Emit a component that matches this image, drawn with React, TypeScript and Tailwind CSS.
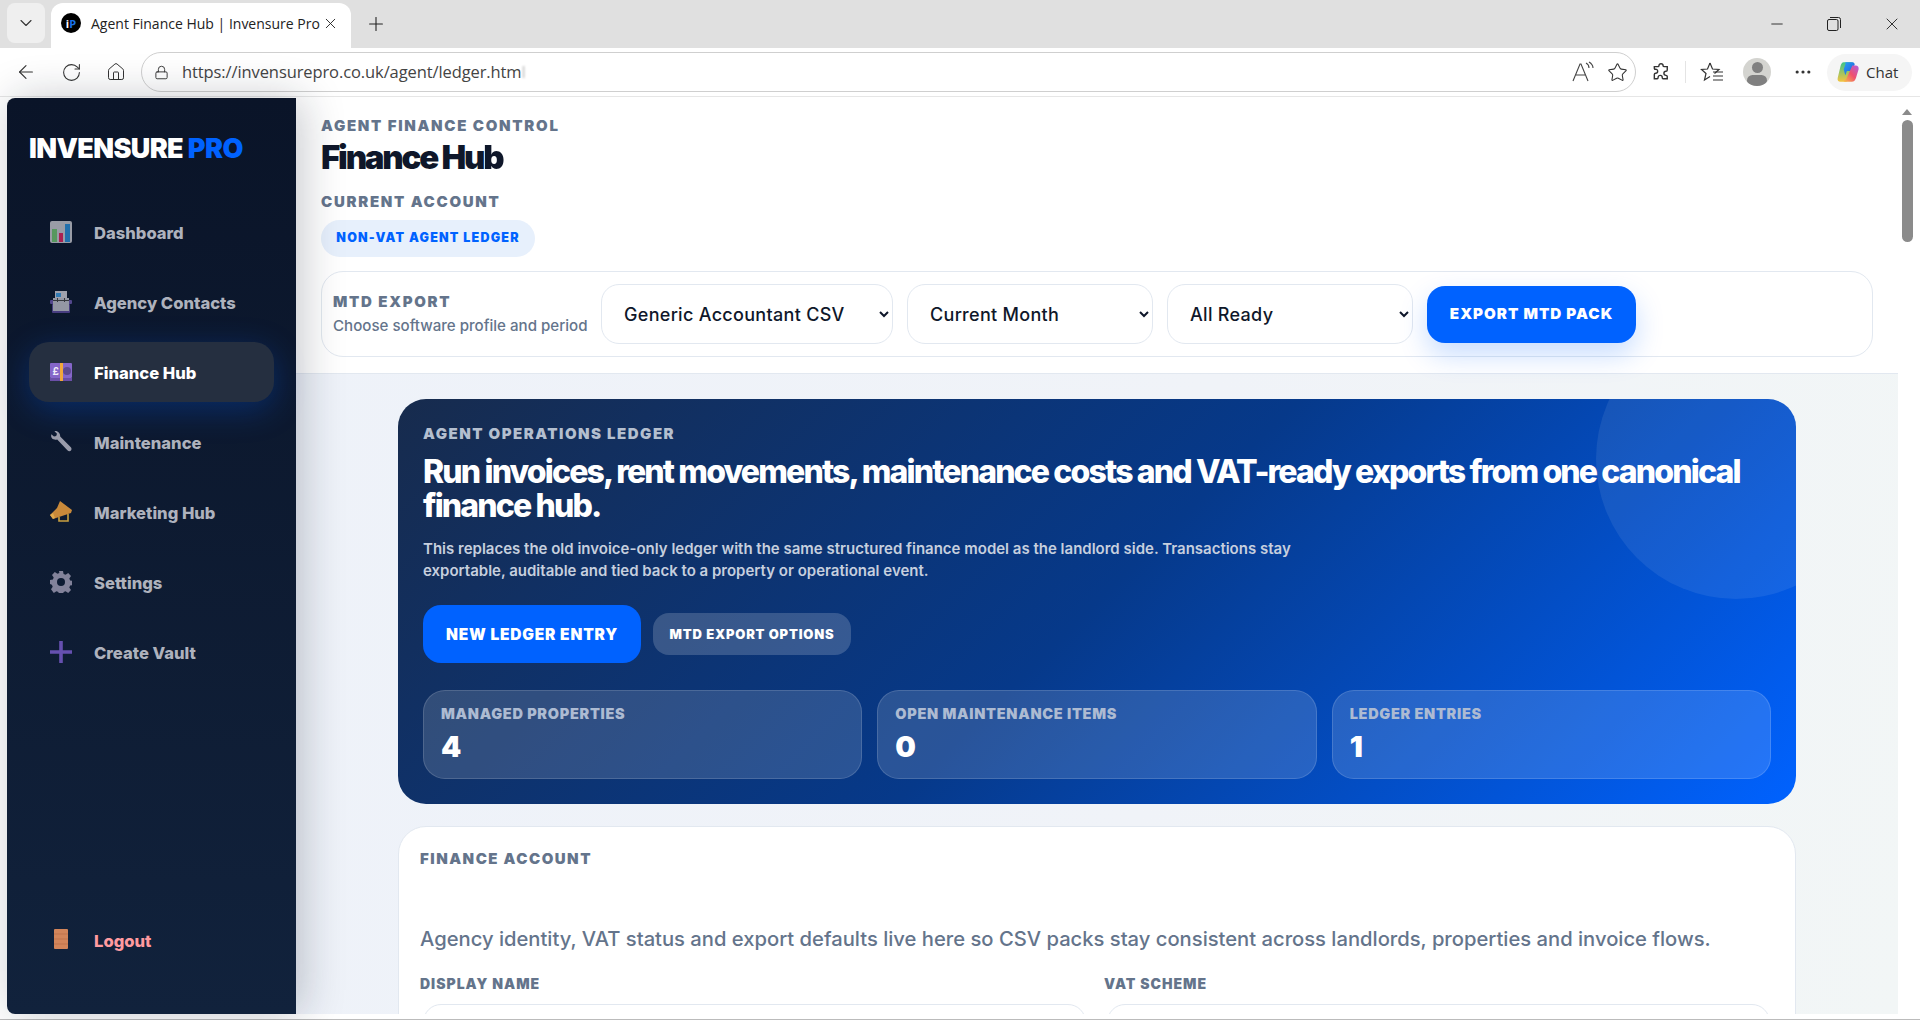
import { ArrowLeft, ChevronDown, Home, Lock, Minus, MoreHorizontal, Plus, RotateCw, Star, X } from "lucide-react";

const font = "font-['Inter','Noto_Sans',sans-serif]";
const chromeFont = "font-['Open_Sans','Noto_Sans',sans-serif]";

const DashIcon = () => (
  <svg viewBox="0 0 22 22" className="w-[22px] h-[22px] opacity-75">
    <rect x="0" y="0" width="22" height="22" rx="2" fill="#c9c9d0" />
    <rect x="2" y="8" width="5" height="13" fill="#6fc46f" />
    <rect x="9" y="12" width="4" height="9" fill="#e0245e" />
    <rect x="15" y="3" width="5" height="18" fill="#2a8fd8" />
  </svg>
);

const ContactsIcon = () => (
  <svg viewBox="0 0 22 22" className="w-[22px] h-[22px] opacity-75">
    <rect x="2" y="13" width="18" height="9" rx="1" fill="#5c4a9c" />
    <rect x="5" y="0" width="12" height="9" fill="#d0d0d8" />
    <rect x="6" y="2" width="5" height="4" fill="#3f9be0" />
    <rect x="0" y="9" width="22" height="4" rx="1" fill="#6b58ad" />
    <rect x="3" y="7" width="16" height="13" fill="#c2c2cc" />
    <rect x="3" y="9" width="16" height="1" fill="#444" />
    <rect x="7" y="7" width="1" height="4" fill="#444" />
    <rect x="14" y="7" width="1" height="4" fill="#444" />
  </svg>
);

const MoneyIcon = () => (
  <svg viewBox="0 0 22 22" className="w-[22px] h-[22px]">
    <rect x="0" y="2" width="22" height="15" rx="1" fill="#8566c9" />
    <rect x="0" y="17" width="22" height="3" fill="#6b4fa8" />
    <rect x="10" y="2" width="3" height="18" fill="#f2a83b" />
    <circle cx="17" cy="10" r="4" fill="#5f4a91" />
    <text x="2.500" y="13.500" fontSize="10" fontWeight="700" fill="#f1edfa" fontFamily="Inter, sans-serif">£</text>
  </svg>
);

const WrenchIcon = () => (
  <svg viewBox="0 0 24 24" className="w-[24px] h-[24px] -mx-px">
    <path
      d="M5.500 1.200 8 3.800 7.200 6 5 6.600 2.300 4.200C1.600 6.800 2.800 9.200 5.400 9.600 6.400 9.800 7.400 9.600 8.200 9.400L18.400 20.200C19.400 21.400 21.200 21.400 22 20.400 22.900 19.400 22.600 18 21.600 17L11.200 6.600C11.400 3.600 8.800.6 5.500 1.200Z"
      fill="#9a9cab"
    />
  </svg>
);

const MegaphoneIcon = () => (
  <svg viewBox="0 0 22 22" className="w-[22px] h-[22px]">
    <path d="M10 0 22 9 21 12 3 18 0 14 7 7Z" fill="#c9893a" />
    <path d="M0 14 3 12 5 17 3 18Z" fill="#e0a94e" />
    <path d="M9 16V20H18V13" fill="none" stroke="#c9a040" strokeWidth="1.600" />
  </svg>
);

const GearIcon = () => (
  <svg viewBox="0 0 22 22" className="w-[22px] h-[22px]">
    <path
      d="M9 0h4l.6 3 2 .8 2.600-1.700 2.800 2.800-1.700 2.600.8 2 2.900.500v4l-2.900.6-.8 2 1.700 2.500-2.800 2.800-2.600-1.700-2 .8-.6 3H9l-.6-3-2-.8-2.600 1.700L1 18.200l1.700-2.500-.8-2L0 13V9l2.900-.5.8-2L2 3.900 4.800 1.100l2.600 1.700 2-.8Z"
      fill="#82829a"
    />
    <circle cx="11" cy="11" r="4" fill="#0d1b33" />
  </svg>
);

const PlusIcon = () => (
  <svg viewBox="0 0 22 22" className="w-[22px] h-[22px]">
    <path d="M9.200 0h3.600v9.200H22v3.600h-9.200V22H9.200v-9.200H0V9.200h9.200Z" fill="#6650b0" />
  </svg>
);

const DoorIcon = () => (
  <svg viewBox="0 0 22 22" className="w-[22px] h-[22px]">
    <rect x="4" y="0" width="14" height="20" rx="1" fill="#d3855a" />
    <path d="M4 5h14M4 10h14M4 15h14" stroke="#b96f47" strokeWidth="0.700" />
  </svg>
);

const items = [
  { label: "Dashboard", icon: <DashIcon /> },
  { label: "Agency Contacts", icon: <ContactsIcon /> },
  { label: "Finance Hub", icon: <MoneyIcon />, active: true },
  { label: "Maintenance", icon: <WrenchIcon /> },
  { label: "Marketing Hub", icon: <MegaphoneIcon /> },
  { label: "Settings", icon: <GearIcon /> },
  { label: "Create Vault", icon: <PlusIcon /> },
];

const stats = [
  { label: "MANAGED PROPERTIES", value: "4" },
  { label: "OPEN MAINTENANCE ITEMS", value: "0" },
  { label: "LEDGER ENTRIES", value: "1" },
];

const BrowserChrome = () => (
  <div className={chromeFont}>
    <div className="h-12 bg-[#e0e0e0] flex items-start pt-[3px] pl-[7px]">
      <div className="w-[38px] h-[40px] rounded-lg bg-[#efefef] flex items-center justify-center">
        <ChevronDown size={20} strokeWidth={1.300} className="text-[#333]" />
      </div>
      <div className="ml-[6px] w-[300px] h-[45px] bg-white rounded-t-xl flex items-center pl-[10px] pr-[12px] pb-[5px]">
        <div className="w-5 h-5 shrink-0 rounded-full bg-black flex items-center justify-center text-[11px] font-bold leading-none">
          <span className="text-white">i</span>
          <span className="text-[#1a73e8]">P</span>
        </div>
        <span className="ml-[10px] text-[14px] text-[#222] whitespace-nowrap">Agent Finance Hub | Invensure Pro</span>
        <X size={17} strokeWidth={1.300} className="ml-auto text-[#222]" />
      </div>
      <div className="ml-[14px] h-[42px] flex items-center">
        <Plus size={22} strokeWidth={1.200} className="text-[#222]" />
      </div>
      <div className="ml-auto h-[42px] flex items-center pr-[18px] gap-[41px] text-[#222]">
        <Minus size={18} strokeWidth={1.200} />
        <svg viewBox="0 0 14 14" className="w-[14px] h-[14px]" fill="none" stroke="#222" strokeWidth="1">
          <rect x="0.500" y="2.500" width="10.500" height="11" rx="1.500" />
          <path d="M3 .5h8.500a2 2 0 0 1 2 2V11" />
        </svg>
        <X size={20} strokeWidth={1.100} />
      </div>
    </div>
    <div className="h-[49px] bg-white flex items-center border-b border-[#e6e6e6] text-[#333]">
      <div className="w-[141px] shrink-0 flex items-center pl-[15px] gap-[24px]">
        <ArrowLeft size={22} strokeWidth={1.200} />
        <RotateCw size={21} strokeWidth={1.200} />
        <Home size={20} strokeWidth={1.200} />
      </div>
      <div className="w-[1495px] h-10 rounded-full border-[1.5px] border-[#cfcfcf] flex items-center pl-[12px] pr-[6px]">
        <Lock size={15} strokeWidth={1.500} />
        <span className="ml-[13px] text-[16.500px] text-[#444] tracking-[-0.1px]">https://invensurepro.co.uk/agent/ledger.htm</span>
        <span className="text-[16.500px] text-[#bbb] blur-[1px]">l</span>
        <svg viewBox="0 0 24 24" className="ml-auto w-[24px] h-[24px]" fill="none" stroke="#444" strokeWidth="1.100">
          <path d="M2 21 9 4h1l7 17M5 15h9" />
          <path d="M15 3c2 1 3 3 3 5M18 2c2.500 1.500 4 4 4 6" />
        </svg>
        <Star size={21} strokeWidth={1.200} className="ml-[12px] mr-[1px]" />
      </div>
      <svg viewBox="0 0 24 24" className="ml-[15px] w-[20px] h-[20px]" fill="none" stroke="#333" strokeWidth="1.700">
        <path d="M9.500 4.500a2.500 2.500 0 0 1 5 0c0 1 .5 1 1.500 1h3.500v4c0 1-.500 1.500-1.500 1.500a2.500 2.500 0 0 0 0 5c1 0 1.500.5 1.500 1.500v2.500h-5c-1 0-1-.5-1-1.500a2.500 2.500 0 0 0-5 0c0 1 0 1.500-1 1.500H4v-5c0-1 .5-1.500 1.500-1.500a2.500 2.500 0 0 0 0-5C4.500 9 4 8.500 4 7.500v-2h4.500c.5 0 1 0 1-1Z" />
      </svg>
      <div className="ml-[14px] w-px h-[22px] bg-[#e4e4e4]" />
      <svg viewBox="0 0 24 24" className="ml-[14px] w-[24px] h-[24px]" fill="none" stroke="#333" strokeWidth="1.200">
        <path d="M10 3 12.500 9 19 9.500 14.500 13.500M10 3 7.500 9 1.500 9.500 6 13.500 4.500 20 10 16.500" />
        <path d="M13 13h10M13 17h10M13 21h10" transform="translate(0 -1)" />
      </svg>
      <div className="ml-[19px] w-7 h-7 rounded-full bg-[#d4d4d0] overflow-hidden flex flex-col items-center">
        <div className="mt-1 w-[11px] h-[11px] rounded-full bg-[#808080]" />
        <div className="mt-[2px] w-[20px] h-[12px] rounded-full bg-[#808080]" />
      </div>
      <MoreHorizontal size={20} strokeWidth={1.800} className="ml-[22px]" />
      <div className="ml-[14px] w-[85px] h-[37px] bg-[#f5f5f5] rounded-full flex items-center pl-[8px]">
        <svg viewBox="0 0 24 24" className="w-[26px] h-[26px]">
          <defs>
            <linearGradient id="cpA" x1="0" y1="0" x2="1" y2="1">
              <stop offset="0" stopColor="#2a9df4" />
              <stop offset="1" stopColor="#1d5fd8" />
            </linearGradient>
            <linearGradient id="cpB" x1="0" y1="1" x2="1" y2="0">
              <stop offset="0" stopColor="#f6c445" />
              <stop offset="0.500" stopColor="#f0506e" />
              <stop offset="1" stopColor="#b05fe0" />
            </linearGradient>
            <linearGradient id="cpC" x1="0" y1="0" x2="0" y2="1">
              <stop offset="0" stopColor="#3dc48a" />
              <stop offset="1" stopColor="#f4c43f" />
            </linearGradient>
          </defs>
          <path d="M8 3h7c1.500 0 1.800 1 1.500 2l-4 14c-.4 1.300-1.200 2-2.500 2H5c-2 0-3-1.500-2.500-3.500L5 7c.5-2.500 1.500-4 3-4Z" fill="url(#cpC)" />
          <path d="M9 3h7c1 0 1.800.5 2.200 1.800L16 11h-5l-1.500 4L8 9.500 9.700 4.500C10 3.500 9.500 3 9 3Z" fill="url(#cpA)" />
          <path d="M16 6h3c2 0 3.200 1.500 2.800 3.500L19.500 17c-.7 2.500-2 4-4 4h-6c-1 0-1.800-.5-2-1.500 1.500 0 2.800-.5 3.300-2Z" fill="url(#cpB)" />
        </svg>
        <span className="ml-[5px] text-[15px] text-[#333]">Chat</span>
      </div>
    </div>
  </div>
);

const Sidebar = () => (
  <aside className="relative z-10 w-[289px] shrink-0 rounded-tl-lg rounded-bl-lg bg-gradient-to-b from-[#0a1428] to-[#11223c] flex flex-col shadow-[6px_0_44px_rgba(15,23,42,0.24)]">
    <div className="pl-[22px] pt-[36px] h-[104px] text-[27px] font-black tracking-[-0.6px] leading-[30px] text-white">
      INVENSURE <span className="text-[#0062ff]">PRO</span>
    </div>
    <nav className="flex flex-col gap-[10px] px-[22px]">
      {items.map((item) => (
        <div
          key={item.label}
          className={
            item.active
              ? "h-[60px] rounded-[20px] bg-[#252f40] flex items-center pl-[21px] gap-[22px] text-[16.600px] font-extrabold text-white shadow-[0_8px_32px_rgba(0,98,255,0.28)]"
              : "h-[60px] rounded-[20px] flex items-center pl-[21px] gap-[22px] text-[16.600px] font-extrabold text-[#aeb2bd]"
          }
        >
          {item.icon}
          <span className="pt-[2px]">{item.label}</span>
        </div>
      ))}
    </nav>
    <div className="mt-auto mb-[44px] mx-[22px] h-[60px] flex items-center pl-[21px] gap-[22px] text-[16.600px] font-extrabold text-[#ff9a9f]">
      <DoorIcon />
      <span className="pt-[2px]">Logout</span>
    </div>
  </aside>
);

const SelectBox = ({ w, value }: { w: string; value: string }) => (
  <select
    defaultValue={value}
    className={`${w} h-[60px] rounded-[18px] border border-[#e2e8f0] bg-white pl-[18px] pr-[8px] text-[18px] font-medium tracking-[0.3px] text-[#0f172a]`}
  >
    <option>{value}</option>
  </select>
);

const Header = () => (
  <header className="bg-white border-b border-[#e2e8f0] h-[276px] pl-[25px] pr-[25px] pt-[20px] shrink-0">
    <div className="text-[15px] leading-[16px] font-black tracking-[1.700px] text-[#64748b]">AGENT FINANCE CONTROL</div>
    <h1 className="mt-[2px] text-[33px] leading-[42px] font-black tracking-[-2.200px] text-[#0f172a]">
      Finance Hu<span className="blur-[0.6px]">b</span>
    </h1>
    <div className="mt-[15px] text-[15px] leading-[18px] font-black tracking-[1.700px] text-[#64748b]">CURRENT ACCOUNT</div>
    <div className="mt-[9px] w-[214px] h-[37px] rounded-full bg-[#e7f0fc] flex items-center justify-center text-[12.500px] font-black tracking-[1.200px] text-[#0062ff]">
      NON-VAT AGENT LEDGER
    </div>
    <div className="mt-[14px] h-[86px] rounded-[22px] border border-[#e2e8f0] flex items-center pl-[11px] gap-[14px]">
      <div className="w-[254px] shrink-0">
        <div className="text-[15px] leading-[18px] font-black tracking-[1.700px] text-[#64748b]">MTD EXPORT</div>
        <div className="mt-[5px] text-[15.100px] leading-[20px] font-medium text-[#64748b] whitespace-nowrap">Choose software profile and period</div>
      </div>
      <SelectBox w="w-[292px]" value="Generic Accountant CSV" />
      <SelectBox w="w-[246px]" value="Current Month" />
      <SelectBox w="w-[246px]" value="All Ready" />
      <button className="w-[209px] h-[57px] rounded-[18px] bg-[#0062ff] text-white text-[15.200px] font-black tracking-[1px] shadow-[0_12px_28px_rgba(0,98,255,0.22)]">
        EXPORT MTD PACK
      </button>
    </div>
  </header>
);

const Hero = () => (
  <section className="relative overflow-hidden w-[1398px] mx-auto h-[405px] rounded-[28px] bg-[linear-gradient(135deg,#172b4d_0%,#06398a_50%,#0062ff_100%)] px-[25px] pt-[26px] text-white">
    <div className="absolute -top-[80px] -right-[80px] w-[280px] h-[280px] rounded-full bg-white/8" />
    <div className="relative text-[15px] leading-[18px] font-black tracking-[1.500px] text-[#b4bfcf]">AGENT OPERATIONS LEDGER</div>
    <h2 className="relative mt-[12px] text-[32px] leading-[34px] font-extrabold tracking-[-1.850px]">
      Run invoices, rent movements, maintenance costs and VAT-ready exports from one canonical finance hub.
    </h2>
    <p className="relative mt-[15px] max-w-[900px] text-[15px] leading-[22px] font-semibold text-[#c6cfde]">
      This replaces the old invoice-only ledger with the same structured finance model as the landlord side. Transactions stay exportable, auditable and tied back to a property or operational event.
    </p>
    <div className="relative mt-[23px] flex items-center gap-[12px]">
      <button className="w-[218px] h-[58px] pt-[2px] rounded-[18px] bg-[#0062ff] text-[15.500px] font-black tracking-[0.800px]">NEW LEDGER ENTRY</button>
      <button className="w-[198px] h-[42px] pt-[2px] rounded-[16px] bg-white/18 text-[13px] font-black tracking-[0.800px]">MTD EXPORT OPTIONS</button>
    </div>
    <div className="relative mt-[27px] grid grid-cols-3 gap-[15px]">
      {stats.map((s) => (
        <div key={s.label} className="h-[89px] rounded-[22px] bg-white/14 border border-white/14 pl-[17px] pt-[14px]">
          <div className="text-[14.500px] leading-[18px] font-black tracking-[0.700px] text-[#adbbd2]">{s.label}</div>
          <div className="mt-[6px] text-[29px] leading-[36px] font-black">{s.value}</div>
        </div>
      ))}
    </div>
  </section>
);

const FinanceCard = () => (
  <section className="w-[1398px] mx-auto mt-[22px] rounded-t-[28px] bg-white border border-[#e2e8f0] px-[21px] pt-[23px] h-[400px]">
    <div className="text-[15px] leading-[18px] font-black tracking-[1.500px] text-[#64748b]">FINANCE ACCOUNT</div>
    <p className="mt-[57px] text-[20.200px] leading-[28px] font-medium text-[#64748b] whitespace-nowrap">
      Agency identity, VAT status and export defaults live here so CSV packs stay consistent across landlords, properties and invoice flows.
    </p>
    <div className="mt-[22px] grid grid-cols-2 gap-[14px]">
      <div>
        <div className="text-[14px] leading-[18px] font-black tracking-[1px] text-[#64748b]">DISPLAY NAME</div>
        <div className="mt-[11px] ml-[3px] mr-[4px] h-[60px] rounded-[18px] border border-[#e2e8f0]" />
      </div>
      <div>
        <div className="text-[14px] leading-[18px] font-black tracking-[1px] text-[#64748b]">VAT SCHEME</div>
        <div className="mt-[11px] ml-[3px] mr-[4px] h-[60px] rounded-[18px] border border-[#e2e8f0]" />
      </div>
    </div>
  </section>
);

const Scrollbar = () => (
  <div className="w-[22px] shrink-0 bg-white flex flex-col items-center pt-[11px] pr-[4px] rounded-tr-lg">
    <div className="w-0 h-0 border-l-[5px] border-r-[5px] border-b-[6px] border-l-transparent border-r-transparent border-b-[#8b8b8b]" />
    <div className="mt-[5px] w-[11px] h-[122px] rounded-full bg-[#8b8b8b]" />
  </div>
);

export default function App() {
  return (
    <div className={`${font} h-screen flex flex-col overflow-hidden bg-white`}>
      <BrowserChrome />
      <div className="mt-px flex-1 min-h-0 flex pl-[7px] pb-[5px] border-b border-[#bbb]">
        <Sidebar />
        <main className="flex-1 min-w-0 flex flex-col bg-[linear-gradient(100deg,#eef2f9_0%,#f0f3f8_55%,#f2f6f6_100%)] overflow-hidden">
          <Header />
          <div className="flex-1 min-h-0 overflow-hidden pt-[25px]">
            <Hero />
            <FinanceCard />
          </div>
        </main>
        <Scrollbar />
      </div>
    </div>
  );
}
